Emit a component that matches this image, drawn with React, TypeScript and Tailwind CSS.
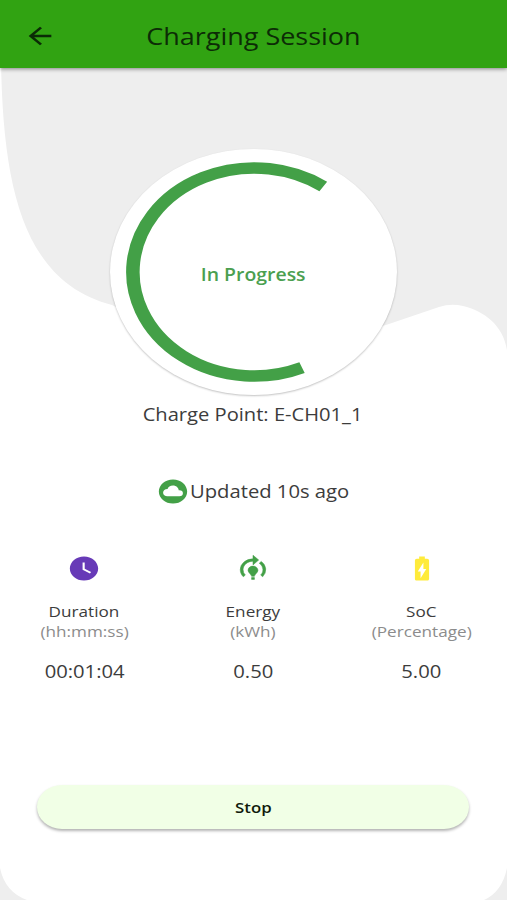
import React from "react";
import {
  MdArrowBack,
  MdBatteryChargingFull,
  MdCloudCircle,
  MdModelTraining,
  MdWatchLater,
} from "react-icons/md";
import type { IconType } from "react-icons";

interface Metric {
  label: string;
  unit: string;
  value: string;
  icon: IconType;
  color: string;
}

const metrics: Metric[] = [
  {
    label: "Duration",
    unit: "(hh:mm:ss)",
    value: "00:01:04",
    icon: MdWatchLater,
    color: "text-[#673ab7]",
  },
  {
    label: "Energy",
    unit: "(kWh)",
    value: "0.50",
    icon: MdModelTraining,
    color:
      "text-[#43a047] [&_path:not([fill])]:stroke-current [&_path:not([fill])]:stroke-[0.4]",
  },
  {
    label: "SoC",
    unit: "(Percentage)",
    value: "5.00",
    icon: MdBatteryChargingFull,
    color: "text-[#ffeb3b]",
  },
];

const Header: React.FC = () => (
  <header className="relative z-10 grid h-[68px] grid-cols-[79px_1fr_80px] items-center bg-[#31a312] pt-[3px] shadow-[0_1px_4px_rgba(0,0,0,0.45)]">
    <button className="flex justify-center" aria-label="Back">
      <MdArrowBack
        preserveAspectRatio="none"
        className="h-[28px] w-[34px] text-[#0b2b06]"
      />
    </button>
    <h1 className="text-center text-[23.5px] leading-8 whitespace-nowrap text-[#0c2c06]">
      <span className="inline-block scale-x-[1.147]">Charging Session</span>
    </h1>
  </header>
);

const ProgressRing: React.FC = () => (
  <div className="relative mx-auto mt-[81px] flex h-[246px] w-[287px] items-center justify-center rounded-[50%] bg-white shadow-[0_1px_2px_rgba(0,0,0,0.24)]">
    <svg
      viewBox="0 0 246 246"
      preserveAspectRatio="none"
      className="absolute inset-0 h-full w-full"
    >
      <path
        d="M164.6 218.6A104 104 0 1 1 182.8 37.5"
        fill="none"
        stroke="#43a047"
        strokeWidth="11.6"
      />
    </svg>
    <span className="inline-block scale-x-[1.11] pt-1 text-[17.5px] font-semibold text-[#4b9f50]">
      In Progress
    </span>
  </div>
);

const MetricColumn: React.FC<{ metric: Metric }> = ({ metric }) => {
  const Icon = metric.icon;
  return (
    <div className="flex flex-col items-center">
      <Icon
        preserveAspectRatio="none"
        stroke="none"
        className={`h-[29px] w-[34px] ${metric.color}`}
      />
      <span className="mt-[18px] scale-x-[1.143] text-[15px] leading-5 text-[#3c3c3c]">
        {metric.label}
      </span>
      <span className="scale-x-[1.143] text-[15px] leading-5 text-[#8c8c8c]">
        {metric.unit}
      </span>
      <span className="mt-[18px] scale-x-[1.155] text-[17.5px] leading-6 text-[#3c3c3c]">
        {metric.value}
      </span>
    </div>
  );
};

const App: React.FC = () => (
  <div className="relative h-[900px] w-[507px] overflow-hidden bg-white font-['Open_Sans',sans-serif]">
    <svg
      viewBox="0 0 507 900"
      className="absolute inset-0 h-full w-full"
      fill="#eeeeee"
    >
      <path d="M1 60C3 190 24 282 112 305C200 350 330 341 386 325L439 307Q451 303 463 306C484 311 503 325 507 350V60Z" />
      <path d="M0 868Q5 892 27 900H0ZM507 868Q502 892 484 900H507Z" />
    </svg>
    <Header />
    <main className="relative w-[506px]">
      <ProgressRing />
      <p className="mt-[7px] text-center text-[17.5px] leading-6 text-[#3c3c3c]">
        <span className="inline-block scale-x-[1.15]">
          Charge Point: E-CH01_1
        </span>
      </p>
      <div className="mt-[51px] flex h-[29px] items-center justify-center">
        <MdCloudCircle
          preserveAspectRatio="none"
          className="h-[29px] w-[34px] text-[#43a047]"
        />
        <span className="w-[160px] origin-left scale-x-[1.155] pb-[2px] text-[17.5px] leading-6 whitespace-nowrap text-[#3c3c3c]">
          Updated 10s ago
        </span>
      </div>
      <section className="mt-[48px] grid grid-cols-3">
        {metrics.map((m) => (
          <MetricColumn key={m.label} metric={m} />
        ))}
      </section>
      <button className="mx-auto mt-[102px] flex h-[44px] w-[432px] items-center justify-center rounded-[25px/22px] bg-[#f1ffe6] pt-px text-[15px] font-semibold text-[#101a0c] shadow-[0_2px_3px_rgba(0,0,0,0.3)]">
        <span className="scale-x-[1.12]">Stop</span>
      </button>
    </main>
  </div>
);

export default App;
